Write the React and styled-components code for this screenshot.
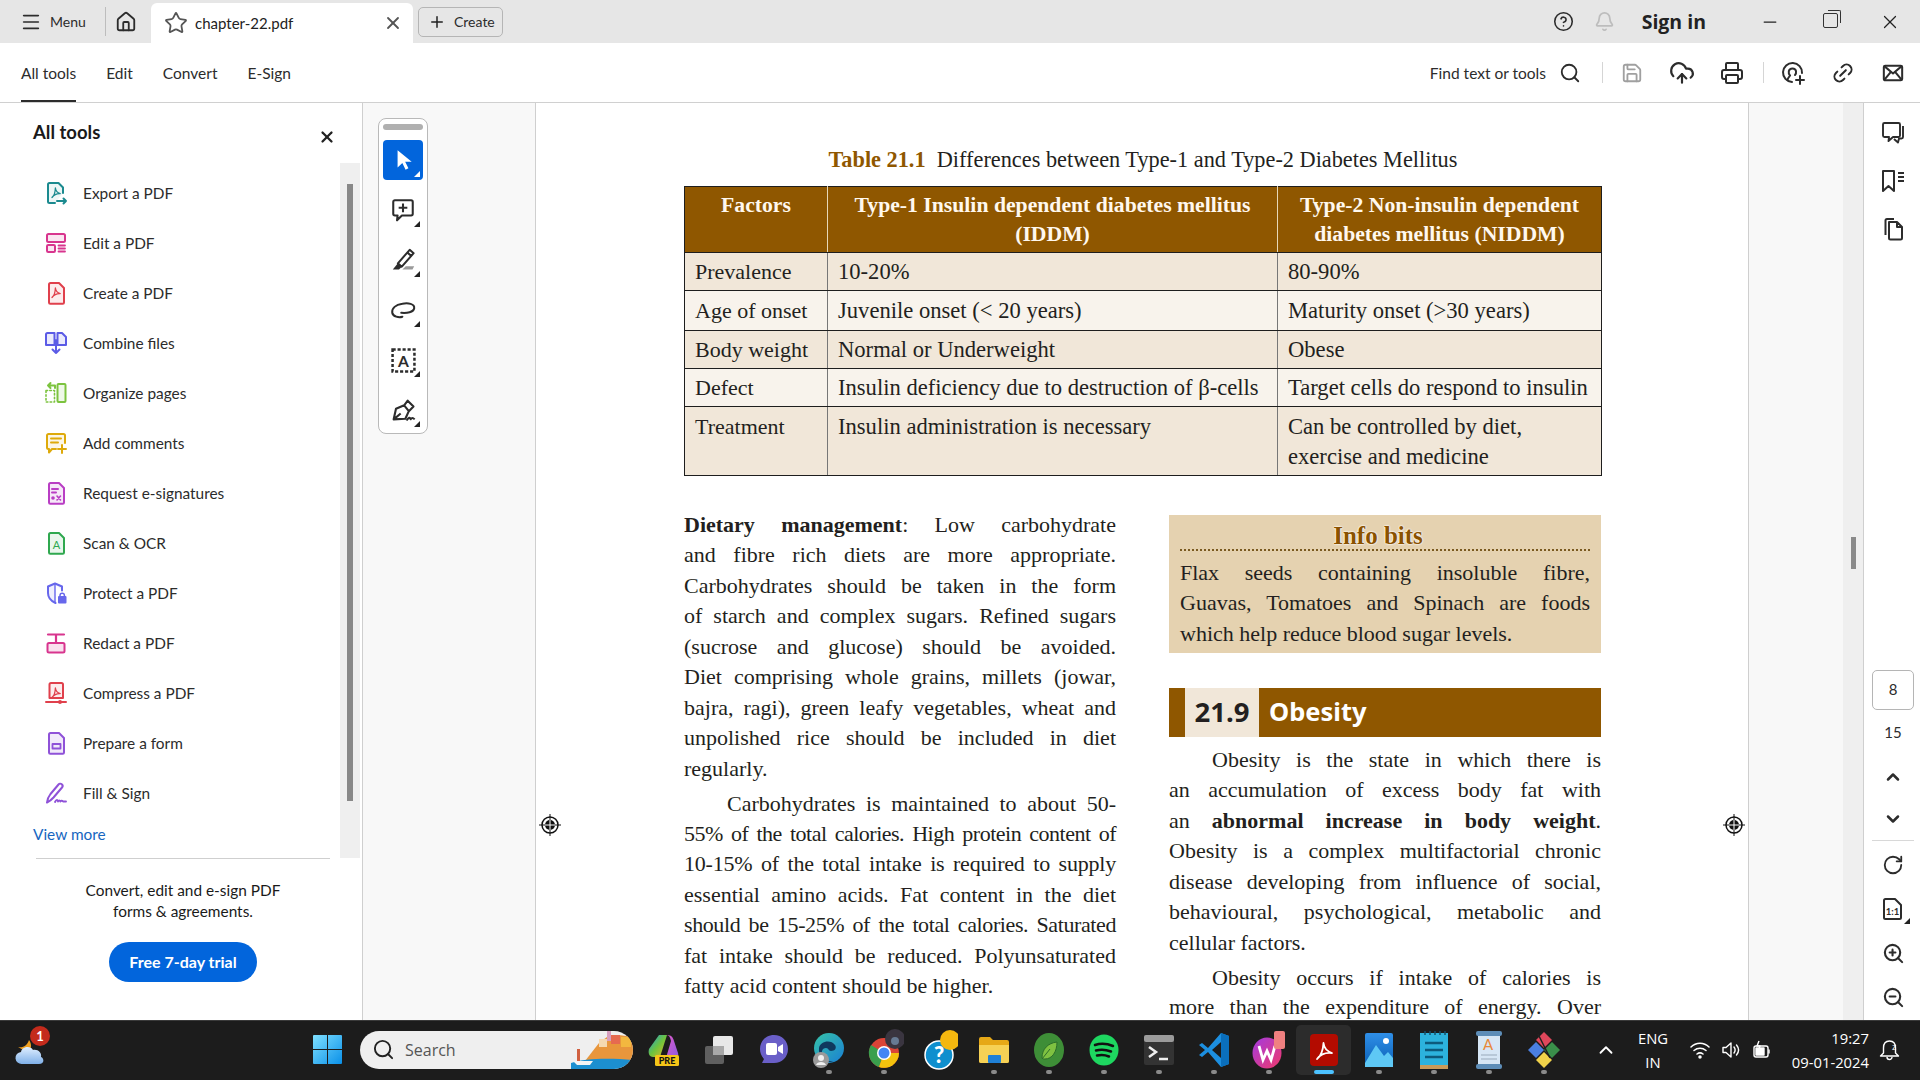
import React from 'react';
import styled, { createGlobalStyle } from 'styled-components';
import {
  Menu, Home, Star, X, Plus, CircleHelp, Bell, Search, Save, CloudUpload, Printer, Link2,
  ChevronUp, ChevronDown, RotateCw, ZoomIn, ZoomOut, Minus,
} from 'lucide-react';

const Global = createGlobalStyle`
  html, body { margin: 0; padding: 0; background: #fff; }
  body { font-family: Lato, "Open Sans", sans-serif; color: #2c2c2c; }
  * { box-sizing: border-box; }
`;

const Glyph = ({ c }) => (
  <path d="M8 16.5c2-1.6 3.2-4.6 3.4-9.5.3 2.6 2 4.800 4.800 5.600-2.800-.2-5.800.6-8.200 3.900z" fill="none" stroke={c} strokeWidth="1.300" strokeLinejoin="round" />
);

const SideIcon = ({ children }) => (
  <svg width="24" height="24" viewBox="0 0 24 24" fill="none" strokeLinecap="round" strokeLinejoin="round">{children}</svg>
);

const DOC = 'M5 21.500V3.500A1.500 1.500 0 0 1 6.500 2H15l5 5v14.500a1.200 1.200 0 0 1-1.200 1.200H6.200A1.200 1.200 0 0 1 5 21.500z';

const tools = [
  ['Export a PDF', <SideIcon key="a">
    <path d="M19 12V6.500L14.500 2H5.500A1.500 1.500 0 0 0 4 3.500v17A1.500 1.500 0 0 0 5.500 22H11" stroke="#1b8a8f" strokeWidth="2" fill="#1b8a8f" fillOpacity=".08" />
    <Glyph c="#1b8a8f" />
    <path d="M13 20h9M19.500 17.500 22 20l-2.500 2.500" stroke="#1b8a8f" strokeWidth="2" />
  </SideIcon>],
  ['Edit a PDF', <SideIcon key="b">
    <rect x="3" y="3" width="18" height="8" rx="1.500" stroke="#d8358e" strokeWidth="2" fill="#d8358e" fillOpacity=".12" />
    <rect x="3" y="14" width="8" height="7" rx="1.200" stroke="#d8358e" strokeWidth="2" fill="#d8358e" fillOpacity=".12" />
    <path d="M14.500 14.500H21M14.500 17.500H21M14.500 20.500H21" stroke="#d8358e" strokeWidth="1.800" />
  </SideIcon>],
  ['Create a PDF', <SideIcon key="c">
    <path d={DOC} stroke="#e0404c" strokeWidth="2" fill="#e0404c" fillOpacity=".1" />
    <Glyph c="#e0404c" />
  </SideIcon>],
  ['Combine files', <SideIcon key="d">
    <path d="M10.500 14H2V3.500A1.500 1.500 0 0 1 3.500 2h7zM13.500 14H22V6l-4-4h-4.500z" stroke="#5b5be6" strokeWidth="2" fill="#5b5be6" fillOpacity=".12" />
    <path d="M12 9v13M8.500 18.500 12 22l3.500-3.500" stroke="#5b5be6" strokeWidth="2" />
  </SideIcon>],
  ['Organize pages', <SideIcon key="e">
    <rect x="13.500" y="3" width="8" height="18" rx="1" stroke="#7cc33f" strokeWidth="2" fill="#7cc33f" fillOpacity=".12" />
    <path d="M2 9.500h8.500v11.500H2z" stroke="#7cc33f" strokeWidth="1.600" strokeDasharray="1.600 2.200" />
    <path d="M11 7V4.500H4M6.500 2 4 4.500 6.500 7" stroke="#7cc33f" strokeWidth="2" />
  </SideIcon>],
  ['Add comments', <SideIcon key="f">
    <path d="M12 18H8l-3 3.500V18H4.500A1.500 1.500 0 0 1 3 16.500v-12A1.500 1.500 0 0 1 4.500 3h15A1.500 1.500 0 0 1 21 4.500V12" stroke="#deaa0b" strokeWidth="2" fill="#deaa0b" fillOpacity=".1" />
    <path d="M7 7.500h10M7 11.500h7M18 14v8M14 18h8" stroke="#deaa0b" strokeWidth="2" />
  </SideIcon>],
  ['Request e-signatures', <SideIcon key="g">
    <path d={DOC} stroke="#b93ec4" strokeWidth="2" fill="#b93ec4" fillOpacity=".12" />
    <path d="M8 8h6M8 11.500h4" stroke="#b93ec4" strokeWidth="2" />
    <circle cx="9" cy="17" r="1.800" fill="#b93ec4" />
    <path d="m13 15 3.500 4M16.500 15 13 19" stroke="#b93ec4" strokeWidth="1.600" />
  </SideIcon>],
  ['Scan & OCR', <SideIcon key="h">
    <path d={DOC} stroke="#2fa84f" strokeWidth="2" fill="#2fa84f" fillOpacity=".1" />
    <text x="12.500" y="18" textAnchor="middle" fontSize="11" fontFamily="Lato" fill="#2fa84f">A</text>
  </SideIcon>],
  ['Protect a PDF', <SideIcon key="i">
    <path d="M11 2.500 4 5.500v6.500c0 4.500 3 8 7.500 10M11 2.500l7 3v4" stroke="#6767ec" strokeWidth="2" fill="#6767ec" fillOpacity=".1" />
    <path d="M11 3v18" stroke="#6767ec" strokeWidth="1.400" />
    <rect x="14" y="15" width="8.500" height="7.500" rx="1" fill="#6767ec" />
    <path d="M16 15.500v-1a2.200 2.200 0 0 1 4.400 0v1" stroke="#6767ec" strokeWidth="1.500" />
  </SideIcon>],
  ['Redact a PDF', <SideIcon key="j">
    <path d="M4 3.500h16M12 3.500v8" stroke="#d8358e" strokeWidth="2.200" />
    <rect x="3.500" y="12" width="17" height="9.500" rx="1.500" stroke="#d8358e" strokeWidth="2" fill="#d8358e" fillOpacity=".15" />
  </SideIcon>],
  ['Compress a PDF', <SideIcon key="k">
    <path d="M5.500 17V3.500A1.500 1.500 0 0 1 7 2h10.500A1.500 1.500 0 0 1 19 3.500V17z" stroke="#e0404c" strokeWidth="2" fill="#e0404c" fillOpacity=".1" />
    <Glyph c="#e0404c" />
    <path d="M2 21h20" stroke="#e0404c" strokeWidth="2" />
    <circle cx="16" cy="21" r="2" fill="#e0404c" />
  </SideIcon>],
  ['Prepare a form', <SideIcon key="l">
    <path d={DOC} stroke="#8f52d8" strokeWidth="2" fill="#8f52d8" fillOpacity=".12" />
    <rect x="8.500" y="13" width="8" height="4.500" stroke="#8f52d8" strokeWidth="1.800" />
  </SideIcon>],
  ['Fill & Sign', <SideIcon key="m">
    <path d="M3 21.500c.3-3.500 1.500-6 3.500-8.500L14.500 3.500a2.300 2.300 0 0 1 3.500 3l-8.500 10c-1.800 2-3.800 3.800-6.500 5z" stroke="#8f52d8" strokeWidth="2" />
    <path d="M11 21c1.500-3 2.500-2.500 3-.5 1-1.500 1.700-1.500 2.300 0 .8-1 1.700-1 3 0H22" stroke="#8f52d8" strokeWidth="1.900" />
  </SideIcon>],
];

const Tri = styled.i`
  position: absolute;
  right: ${(p) => p.$r || 3}px;
  bottom: ${(p) => p.$b || 3}px;
  width: 0;
  height: 0;
  border-left: 6px solid transparent;
  border-bottom: 6px solid ${(p) => (p.$light ? '#fff' : '#222')};
`;

const railIcons = [
  <svg key="1" width="26" height="26" viewBox="0 0 24 24"><path d="M7 3v16l4.400-4.200 3 6.200 2.600-1.300-3-6H20z" fill="#fff" /></svg>,
  <svg key="2" width="26" height="26" viewBox="0 0 24 24" fill="none" stroke="#2c2c2c" strokeWidth="1.900" strokeLinejoin="round"><path d="M4.500 3h15A1.500 1.500 0 0 1 21 4.500v11a1.500 1.500 0 0 1-1.500 1.500H11l-4.500 4.500.5-4.500H4.500A1.500 1.500 0 0 1 3 15.500v-11A1.500 1.500 0 0 1 4.500 3zM12 6v8M8 10h8" /></svg>,
  <svg key="3" width="27" height="27" viewBox="0 1 24 24" fill="none" stroke="#2c2c2c" strokeWidth="1.800" strokeLinejoin="round"><path d="M7 15.500 17.500 3.500l3.500 3L10.500 18.500zM15.500 6l3.500 3" /><path d="m7 15.500 3.500 3L8 21H2.500z" fill="#2c2c2c" stroke="none" /><path d="M11 21h9l1.500-3h-7.500z" fill="#9a9a9a" stroke="none" /></svg>,
  <svg key="4" width="27" height="27" viewBox="0 0 24 24" fill="none" stroke="#2c2c2c" strokeWidth="1.800" strokeLinecap="round"><path d="M10 14c5 .5 11-.5 11.500-4C22 6 16 5 11 6 5 7 1.500 10 2 14c.5 3.500 6 4.500 9 3.500" /></svg>,
  <svg key="5" width="25" height="25" viewBox="0 0 24 24" fill="none"><rect x="1.500" y="1.500" width="21" height="21" stroke="#2c2c2c" strokeWidth="2.400" strokeDasharray="3 1.800" /><text x="12" y="18" textAnchor="middle" fontSize="15" fontWeight="700" fontFamily="Lato" fill="#2c2c2c">A</text></svg>,
  <svg key="6" width="28" height="28" viewBox="0 0 24 24" fill="none" stroke="#2c2c2c" strokeWidth="1.800" strokeLinejoin="round"><path d="m4 20 2-9 7-3 4 5-3 6.500zM13 8l3-4 5 5-4 4M4 20l6-5" /><path d="M15 21c2-3 3-3 3.500-1 1-1.500 2-1.500 3.500 0" strokeWidth="1.700" /></svg>,
];

const Shot = styled.div`
  width: 1920px;
  height: 1080px;
  display: flex;
  flex-direction: column;
  overflow: hidden;
`;

/* title bar */
const TitleBar = styled.div`
  height: 43px;
  flex: none;
  display: flex;
  align-items: center;
  background: #e6e6e6;
  font-size: 14px;
`;

const MenuBtn = styled.div`
  display: flex;
  align-items: center;
  gap: 8px;
  padding-left: 20px;
  width: 106px;
  height: 29px;
  border-right: 1px solid #bdbdbd;
`;

const HomeBtn = styled.div`
  width: 45px;
  padding-right: 5px;
  display: flex;
  justify-content: center;
`;

const Tab = styled.div`
  align-self: flex-end;
  width: 262px;
  height: 40px;
  display: flex;
  align-items: center;
  padding: 0 10px 0 13px;
  background: #fff;
  border-radius: 6px 6px 0 0;
  font-size: 15px;
  color: #222;
`;

const TabName = styled.span`
  flex: 1;
  margin-left: 7px;
`;

const CreateBtn = styled.div`
  margin-left: 5px;
  width: 85px;
  height: 30px;
  display: flex;
  align-items: center;
  gap: 8px;
  padding-left: 9px;
  border: 1px solid #b5b5b5;
  border-radius: 5px;
  font-size: 14px;
`;

const TitleRight = styled.div`
  margin-left: auto;
  display: flex;
  align-items: center;
`;

const BellIcon = styled(Bell)`
  margin-left: 20px;
`;

const SignIn = styled.span`
  margin: 0 34px 0 27px;
  font-family: "Open Sans", sans-serif;
  font-weight: 700;
  font-size: 19.500px;
  color: #222;
`;

const WinBtn = styled.div`
  width: 60px;
  display: flex;
  justify-content: center;
`;

const Restore = styled.div`
  position: relative;
  width: 15px;
  height: 15px;
  margin-top: -3px;
  border: 1.500px solid #333;
  border-radius: 2px;

  &::after {
    content: '';
    position: absolute;
    top: -4px;
    right: -4px;
    width: 12px;
    height: 12px;
    border-top: 1.500px solid #333;
    border-right: 1.500px solid #333;
    border-radius: 0 2px 0 0;
  }
`;

/* tool bar */
const ToolBar = styled.div`
  height: 60px;
  flex: none;
  display: flex;
  align-items: stretch;
  background: #fff;
  border-bottom: 1px solid #d0d0d0;
`;

const NavTabs = styled.div`
  display: flex;
  gap: 30px;
  margin-left: 21px;
`;

const NavTab = styled.div`
  display: flex;
  align-items: center;
  font-size: 15.500px;
  color: #2c2c2c;
  border-bottom: 2px solid ${(p) => (p.$active ? '#2c2c2c' : 'transparent')};
  border-top: 2px solid transparent;
`;

const ToolActions = styled.div`
  margin-left: auto;
  padding-right: 2px;
  display: flex;
  align-items: center;
`;

const FindLabel = styled.span`
  margin-right: 13px;
  font-size: 15.500px;
`;

const VSep = styled.span`
  width: 1px;
  height: 21px;
  background: #d5d5d5;
  margin: 0 ${(p) => p.$r}px 0 ${(p) => p.$l}px;
`;

const ActBtn = styled.div`
  width: 50px;
  display: flex;
  justify-content: center;
`;

const LinkIcon = styled(Link2)`
  transform: rotate(-45deg);
`;

/* main area */
const Main = styled.div`
  position: relative;
  flex: 1;
  min-height: 0;
  display: flex;
`;

const Sidebar = styled.aside`
  width: 363px;
  flex: none;
  display: flex;
  flex-direction: column;
  background: #fff;
  border-right: 1px solid #cfcfcf;
`;

const PanelHead = styled.div`
  height: 60px;
  flex: none;
  display: flex;
  justify-content: space-between;
  padding: 18px 26px 0 33px;
`;

const PanelTitle = styled.h2`
  margin: 0;
  font-size: 18.500px;
  font-weight: 700;
  line-height: 22px;
  color: #1a1a1a;
`;

const PanelClose = styled(X)`
  margin-top: 7px;
`;

const Scroller = styled.div`
  height: 695px;
  flex: none;
  display: flex;
`;

const ToolList = styled.div`
  flex: 1;
  padding-top: 5px;
`;

const ToolRow = styled.div`
  height: 50px;
  display: flex;
  align-items: center;
  gap: 15px;
  padding-left: 44px;
  font-size: 15.400px;
  color: #2c2c2c;
`;

const ViewMore = styled.a`
  display: block;
  margin: 1px 0 0 33px;
  line-height: 30px;
  font-size: 15.400px;
  color: #1666c0;
`;

const Track = styled.div`
  width: 20px;
  margin-right: 2px;
  background: #efefef;
  padding: 21px 0 0 7px;
`;

const Thumb = styled.div`
  width: 6px;
  height: ${(p) => p.$h}px;
  background: #888;
`;

const Promo = styled.div`
  margin: 0 32px 0 36px;
  padding-top: 21px;
  border-top: 1px solid #cfcfcf;
  display: flex;
  flex-direction: column;
  align-items: center;
  text-align: center;
  font-size: 15.400px;
  line-height: 21px;
  color: #1a1a1a;
`;

const TrialBtn = styled.div`
  margin-top: 20px;
  width: 148px;
  height: 40px;
  border-radius: 20px;
  background: #0265dc;
  color: #fff;
  font-size: 16px;
  font-weight: 700;
  line-height: 40px;
`;

const ToolGutter = styled.div`
  width: 173px;
  flex: none;
  padding: 15px 0 0 15px;
  background: #f8f8f8;
  border-right: 1px solid #cfcfcf;
`;

const FloatBar = styled.div`
  width: 50px;
  height: 316px;
  padding: 5px 4px 0;
  background: #fff;
  border: 1px solid #b9b9b9;
  border-radius: 8px;
  display: flex;
  flex-direction: column;
  gap: 10px;
`;

const Handle = styled.div`
  height: 6px;
  border-radius: 3px;
  background: #b0b0b0;
`;

const RailBtn = styled.div`
  position: relative;
  width: 40px;
  height: 40px;
  flex: none;
  display: flex;
  align-items: center;
  justify-content: center;
  border-radius: 4px;
  background: ${(p) => (p.$on ? '#0265dc' : 'transparent')};
`;

/* page */
const Page = styled.main`
  width: 1213px;
  flex: none;
  padding: 42px 0 0 148px;
  background: #fff;
  border-right: 1px solid #cfcfcf;
  overflow: hidden;
  font-family: "Liberation Serif", serif;
  font-size: 22px;
  color: #231f20;
`;

const Caption = styled.div`
  width: 918px;
  height: 30px;
  margin-bottom: 11px;
  font-size: 22.300px;
  line-height: 30px;
  text-align: center;
  white-space: pre;
`;

const CapNum = styled.b`
  color: #8f5700;
`;

const Table = styled.table`
  width: 917px;
  table-layout: fixed;
  border-collapse: collapse;
  line-height: 29px;
`;

const ColA = styled.col`
  width: 143px;
`;

const ColB = styled.col`
  width: 450px;
`;

const ColC = styled.col`
  width: 324px;
`;

const HeadRow = styled.tr`
  height: 66px;
`;

const Tr = styled.tr`
  height: ${(p) => p.$h}px;
  background: ${(p) => (p.$alt ? '#f8f3ec' : '#f1e7d9')};
`;

const Th = styled.th`
  padding: 4px 8px 0;
  background: #8f5700;
  color: #fff8ee;
  font-size: 21.700px;
  border: 1px solid #1e1e1e;
  border-left-color: #e8d8b8;
  border-right-color: #e8d8b8;
  &:first-child { border-left-color: #1e1e1e; }
  &:last-child { border-right-color: #1e1e1e; }
  vertical-align: top;
`;

const Td = styled.td`
  padding: ${(p) => (p.$top ? '5px 8px 0 10px' : '0 8px 0 10px')};
  border: 1px solid #777;
  border-top-color: #1e1e1e;
  border-bottom-color: #1e1e1e;
  line-height: ${(p) => (p.$top ? '30px' : '29px')};
  vertical-align: ${(p) => (p.$top ? 'top' : 'middle')};
  white-space: nowrap;
  &:first-child { border-left-color: #1e1e1e; }
  &:last-child { border-right-color: #1e1e1e; }
  & + & { font-size: 22.600px; }
`;

const Columns = styled.div`
  display: flex;
  gap: 53px;
  margin-top: 34px;
  width: 918px;
`;

const Col = styled.div`
  width: 432px;
  flex: none;
`;

const Para = styled.p`
  margin: ${(p) => p.$mt || 0}px 0 4.500px;
  line-height: 30.450px;
`;

const L = styled.span`
  display: block;
  white-space: normal;
  text-align: justify;
  text-align-last: ${(p) => (p.$end ? 'left' : 'justify')};
  text-indent: ${(p) => (p.$indent ? '43px' : '0')};
  letter-spacing: ${(p) => p.$ls || 0}px;
`;

/* last line sits right above the task bar, so its box is kept short */
const ClosingL = styled(L)`
  margin-top: 3px;
  line-height: 22px;
`;

const InfoBox = styled.div`
  margin-top: 5px;
  height: 138px;
  padding: 6px 11px 0;
  background: #e5d2b0;
`;

const InfoHead = styled.div`
  height: 30px;
  margin-bottom: 7px;
  padding-right: 14px;
  line-height: 30px;
  text-align: center;
  font-size: 25px;
  font-weight: 700;
  color: #8a5200;
  border-bottom: 2px dotted #7a5a20;
  text-shadow: 0 0 1px #fff, 0 0 2px #fff, 0 0 2px #fff;
`;

const SecHead = styled.div`
  margin-top: 35px;
  height: 49px;
  display: flex;
  align-items: stretch;
  padding-left: 16px;
  background: #8f5700;
  font-family: "Noto Sans", sans-serif;
  font-weight: 700;
  line-height: 47px;
`;

const SecNum = styled.span`
  width: 74px;
  text-align: center;
  background: #f1e7d9;
  color: #231f20;
  font-size: 27.500px;
`;

const SecTitle = styled.span`
  margin-left: 10px;
  font-size: 25.500px;
  color: #fff;
`;

const Mark = styled.svg`
  position: absolute;
  top: 710px;
  left: ${(p) => p.$x}px;
`;

const PageGutter = styled.div`
  width: 94px;
  flex: none;
  background: #f8f8f8;
`;

const Strip = styled.div`
  width: 20px;
  flex: none;
  padding: 434px 0 0 8px;
  background: #efefef;
`;

const StripThumb = styled.div`
  width: 5px;
  height: 32px;
  background: #8a8a8a;
`;

const RightRail = styled.div`
  flex: 1;
  display: flex;
  flex-direction: column;
  align-items: center;
  padding: 6px 0 1px 2px;
  background: #fff;
  border-left: 1px solid #cfcfcf;
  font-size: 15px;
`;

const RailSlot = styled.div`
  position: relative;
  width: 100%;
  height: ${(p) => p.$h}px;
  flex: none;
  display: flex;
  align-items: center;
  justify-content: center;
`;

const PageBox = styled.div`
  margin-top: auto;
  width: 42px;
  height: 40px;
  border: 1px solid #b5b5b5;
  border-radius: 5px;
  line-height: 37px;
  text-align: center;
`;

const PageTotal = styled.div`
  margin: 10px 0 12px;
  line-height: 24px;
`;

const RailLine = styled.div`
  width: 42px;
  height: 1px;
  margin-bottom: 2px;
  background: #d8d8d8;
`;

/* task bar */
const TaskBar = styled.footer`
  height: 60px;
  flex: none;
  display: flex;
  align-items: center;
  padding-bottom: 2px;
  background: #1c1c1c;
  border-top: 1px solid #3a3a3a;
  color: #fff;
`;

const Weather = styled.div`
  position: relative;
  width: 313px;
  padding-left: 15px;
  display: flex;
`;

const Badge = styled.span`
  position: absolute;
  left: 30px;
  top: -8px;
  width: 20px;
  height: 20px;
  border-radius: 50%;
  background: #c42b1c;
  font-size: 13px;
  font-weight: 700;
  line-height: 20px;
  text-align: center;
`;

const SearchPill = styled.div`
  width: 273px;
  height: 38px;
  margin-left: 18px;
  display: flex;
  align-items: center;
  gap: 10px;
  padding-left: 12px;
  border-radius: 19px;
  background: #efefef;
  color: #555;
  font-family: "Open Sans", sans-serif;
  font-size: 16px;
  overflow: hidden;
`;

const SearchArt = styled.svg`
  margin-left: auto;
`;

const Apps = styled.div`
  margin-left: 3px;
  display: flex;
`;

const AppSlot = styled.div`
  position: relative;
  width: 55px;
  height: 50px;
  display: flex;
  align-items: center;
  justify-content: center;
  border-radius: 5px;
  background: ${(p) => (p.$active ? '#2c2c2c' : 'transparent')};

  &::after {
    content: '';
    position: absolute;
    display: ${(p) => (p.$dot || p.$active ? 'block' : 'none')};
    bottom: 1px;
    left: 50%;
    width: ${(p) => (p.$active ? 20 : 6)}px;
    height: 4px;
    transform: translateX(-50%);
    border-radius: 2px;
    background: ${(p) => (p.$active ? '#4cc2ff' : '#8a8a8a')};
  }
`;

const Tray = styled.div`
  margin-left: 24px;
  display: flex;
  align-items: center;
  font-family: "Open Sans", sans-serif;
  font-size: 14.800px;
`;

const Lang = styled.div`
  width: 42px;
  margin: 0 16px 0 15px;
  line-height: 24px;
  text-align: center;
`;

const TrayIcons = styled.div`
  display: flex;
  gap: 11px;
  align-items: center;
`;

const Clock = styled.div`
  width: 97px;
  text-align: right;
  line-height: 24px;
`;

const BellWrap = styled.div`
  margin-left: 10px;
  display: flex;
`;

const rows = [
  [38, 'Prevalence', '10-20%', '80-90%'],
  [40, 'Age of onset', 'Juvenile onset (< 20 years)', 'Maturity onset (>30 years)'],
  [38, 'Body weight', 'Normal or Underweight', 'Obese'],
  [38, 'Defect', 'Insulin deficiency due to destruction of β-cells', 'Target cells do respond to insulin'],
];

const left1 = [
  'and fibre rich diets are more appropriate.',
  'Carbohydrates should be taken in the form',
  'of starch and complex sugars. Refined sugars',
  '(sucrose and glucose) should be avoided.',
  'Diet comprising whole grains, millets (jowar,',
  'bajra, ragi), green leafy vegetables, wheat and',
  'unpolished rice should be included in diet',
];

const left2 = [
  ['55% of the total calories. High protein content of', -0.5],
  ['10-15% of the total intake is required to supply', -0.2],
  ['essential amino acids. Fat content in the diet', 0],
  ['should be 15-25% of the total calories. Saturated', -0.4],
  ['fat intake should be reduced. Polyunsaturated', 0],
];

const Cross = () => (
  <>
    <circle cx="12" cy="12" r="8" fill="none" stroke="#111" strokeWidth="1.500" />
    <circle cx="12" cy="12" r="5" fill="#111" />
    <path d="M12 1v22M1 12h22" stroke="#111" strokeWidth="1" />
    <path d="M12 7v10M7 12h10" stroke="#fff" strokeWidth="1" />
  </>
);

const ShareIcon = () => (
  <svg width="24" height="24" viewBox="0 0 24 24" fill="none" stroke="#2c2c2c" strokeWidth="2" strokeLinecap="round">
    <path d="M11 21a9.500 9.500 0 1 1 10-9" />
    <path d="M6.500 19c.5-3 2-3 2.500-4.500-2-2-2-7 2.500-7s4 5 2.500 6.500" />
    <path d="M19 15v8M15 19h8" />
  </svg>
);

const MailIcon = () => (
  <svg width="22" height="22" viewBox="0 0 24 24" fill="none" stroke="#2c2c2c" strokeWidth="2.200" strokeLinejoin="round">
    <rect x="2" y="4" width="20" height="16" rx="1.500" />
    <path d="m2.500 4.500 9.500 8 9.500-8M2.500 19.500l7-8.500M21.500 19.500l-7-8.500" />
  </svg>
);

const CommentsIcon = () => (
  <svg width="24" height="24" viewBox="0 0 24 24" fill="none" stroke="#2c2c2c" strokeWidth="1.900" strokeLinejoin="round">
    <path d="M3.500 2h14a1.500 1.500 0 0 1 1.500 1.500v11a1.500 1.500 0 0 1-1.500 1.500H12l-4.500 4 .5-4H3.500A1.500 1.500 0 0 1 2 14.500v-11A1.500 1.500 0 0 1 3.500 2z" />
    <path d="M22 5v11a1.500 1.500 0 0 1-1.500 1.500H18l-1 4-4-3.500" />
  </svg>
);

const BookmarkIcon = () => (
  <svg width="24" height="24" viewBox="0 0 24 24" fill="none" stroke="#2c2c2c" strokeWidth="2" strokeLinejoin="round">
    <path d="M2 2h11v20l-5.500-5L2 22zM17 4h6M17 8h6M17 12h6" />
  </svg>
);

const PagesIcon = () => (
  <svg width="24" height="24" viewBox="0 0 24 24" fill="none" stroke="#2c2c2c" strokeWidth="2" strokeLinejoin="round">
    <path d="M8 5h8l5 5v11a1.500 1.500 0 0 1-1.500 1.500h-10A1.500 1.500 0 0 1 8 21zM16 5v5h5" />
    <path d="M4.500 18V3.500A1.500 1.500 0 0 1 6 2h7" />
  </svg>
);

const ActualSize = () => (
  <svg width="22" height="24" viewBox="0 0 22 24" fill="none" stroke="#2c2c2c" strokeWidth="2" strokeLinejoin="round">
    <path d="M2 3.500A1.500 1.500 0 0 1 3.500 2H13l6 6v12.500a1.500 1.500 0 0 1-1.500 1.500h-14A1.500 1.500 0 0 1 2 20.500z" />
    <text x="10.500" y="17.500" textAnchor="middle" fontSize="9.500" fontWeight="700" fontFamily="Lato" fill="#2c2c2c" stroke="none">1:1</text>
  </svg>
);

const apps = [
  { key: 'copilot', el: (
    <svg width="32" height="34" viewBox="0 0 32 34">
      <defs><linearGradient id="cp" x1="0" y1="0" x2="1" y2="1"><stop offset="0" stopColor="#1b9de2" /><stop offset=".5" stopColor="#6dc23e" /><stop offset="1" stopColor="#e9b824" /></linearGradient><linearGradient id="cp2" x1="0" y1="0" x2="1" y2="1"><stop offset="0" stopColor="#e259c8" /><stop offset="1" stopColor="#8a5be0" /></linearGradient></defs>
      <path d="M11 2h8l-7 22H5C1 24 0 20 1 16z" fill="url(#cp)" />
      <path d="M19 2c4 0 6 2 7 6l4 12c1 3-1 5-5 5h-7l5-17c-.5-3-2-6-4-6z" fill="url(#cp2)" />
      <rect x="7" y="22" width="24" height="11" rx="1.500" fill="#f5c518" />
      <text x="19" y="31" textAnchor="middle" fontSize="9" fontWeight="900" fontFamily="Lato" fill="#111">PRE</text>
    </svg>) },
  { key: 'tasks', el: (
    <svg width="30" height="30" viewBox="0 0 30 30"><rect x="1" y="11" width="19" height="18" rx="2" fill="#5f5f5f" /><rect x="9" y="1" width="20" height="19" rx="2" fill="#e8e8e8" /><rect x="9" y="11" width="11" height="9" fill="#a8a8a8" /></svg>) },
  { key: 'meet', el: (
    <svg width="30" height="34" viewBox="0 0 30 34"><path d="M15 2c8 0 14 6 14 14s-6 14-14 14H3l2-4C2 23 1 19 1 16 1 8 7 2 15 2z" fill="#6a5fc8" /><rect x="7" y="10" width="11" height="12" rx="2" fill="#fff" /><path d="m19 14 5-3v10l-5-3z" fill="#fff" /></svg>) },
  { key: 'edge', dot: true, el: (
    <svg width="32" height="38" viewBox="0 0 32 38">
      <defs><linearGradient id="ed" x1="0" y1="0" x2="1" y2="1"><stop offset="0" stopColor="#36c3a8" /><stop offset="1" stopColor="#1a7fd4" /></linearGradient></defs>
      <circle cx="16" cy="17" r="15" fill="url(#ed)" />
      <path d="M6 17c1-7 12-9 16-3 2 3 0 6-4 6-3 0-2-3-5-3-4 0-6 5-2 10 2 2 6 4 10 3-8 4-16-4-15-13z" fill="#10395e" />
      <circle cx="8" cy="29" r="8" fill="#9a9a9a" /><circle cx="8" cy="27" r="3" fill="#efefef" /><path d="M3 34c1-4 9-4 10 0z" fill="#efefef" />
    </svg>) },
  { key: 'chrome', dot: true, el: (
    <svg width="40" height="42" viewBox="-4 0 40 42">
      <circle cx="16" cy="24" r="15" fill="#db4437" />
      <path d="M16 24 3 16A15 15 0 0 0 11 38z" fill="#3a9f4d" />
      <path d="M16 24h15a15 15 0 0 1-20 14z" fill="#f4c20d" />
      <circle cx="16" cy="24" r="7" fill="#fff" /><circle cx="16" cy="24" r="5.500" fill="#4285f4" />
      <circle cx="27" cy="10" r="10" fill="#3a3540" /><circle cx="27" cy="12" r="4" fill="#677a93" />
    </svg>) },
  { key: 'help', el: (
    <svg width="38" height="40" viewBox="-4 0 38 40">
      <circle cx="15" cy="25" r="14" fill="#0f8fce" stroke="#fff" strokeWidth="1.500" />
      <text x="15" y="33" textAnchor="middle" fontSize="22" fontWeight="900" fontFamily="Lato" fill="#fff">?</text>
      <circle cx="26" cy="10" r="10" fill="#f4b70f" />
    </svg>) },
  { key: 'files', dot: true, el: (
    <svg width="32" height="28" viewBox="0 0 32 28"><path d="M1 3a2 2 0 0 1 2-2h9l3 3h14a2 2 0 0 1 2 2v19a2 2 0 0 1-2 2H3a2 2 0 0 1-2-2z" fill="#e6a817" /><path d="M1 9h30v16a2 2 0 0 1-2 2H3a2 2 0 0 1-2-2z" fill="#f6d155" /><rect x="10" y="19" width="13" height="8" rx="1" fill="#1f80d6" /></svg>) },
  { key: 'leaf', dot: true, el: (
    <svg width="32" height="36" viewBox="0 0 32 36"><ellipse cx="16" cy="18" rx="15" ry="17" fill="#3e8e37" /><path d="M9 26c0-9 6-15 15-16 0 10-5 17-12 17-1 0-2 0-3-1zM9 27l8-10" fill="#7fc241" stroke="#2c6e2a" /></svg>) },
  { key: 'spotify', dot: true, el: (
    <svg width="30" height="32" viewBox="0 0 30 32"><ellipse cx="15" cy="16" rx="14.500" ry="15.500" fill="#1ed760" /><path d="M6 11c6-2 12-1.500 18 1M7 16.500c5-1.500 10-1 15 1M8 21.500c4-1 8-.8 12 1" fill="none" stroke="#111" strokeWidth="2.500" strokeLinecap="round" /></svg>) },
  { key: 'term', dot: true, el: (
    <svg width="30" height="30" viewBox="0 0 30 30"><rect x="0" y="0" width="30" height="30" rx="2" fill="#333" /><rect width="30" height="7" rx="2" fill="#9b9b9b" /><path d="m5 12 7 5-7 5" fill="none" stroke="#eee" strokeWidth="2.500" /><path d="M15 24h9" stroke="#eee" strokeWidth="2.500" /></svg>) },
  { key: 'vscode', dot: true, el: (
    <svg width="30" height="36" viewBox="0 0 30 36"><path d="M22 1 9 16 3 11 0 13l6 5-6 5 3 2 6-5 13 15 8-3V4z" fill="#1c8fe0" /><path d="M22 1v34l8-3V4z" fill="#0a6fbd" /><path d="m22 10-9 8 9 8z" fill="#1c1c1c" /></svg>) },
  { key: 'wps', dot: true, el: (
    <svg width="34" height="38" viewBox="0 0 34 38">
      <defs><linearGradient id="wp" x1="0" y1="0" x2="1" y2="1"><stop offset="0" stopColor="#a33be0" /><stop offset="1" stopColor="#f0396b" /></linearGradient></defs>
      <ellipse cx="15" cy="22" rx="14.500" ry="15.500" fill="url(#wp)" />
      <path d="m7 15 4 14 4-9 4 9 4-14" fill="none" stroke="#fff" strokeWidth="2.800" />
      <rect x="22" y="0" width="11" height="18" rx="2" fill="#f08080" />
    </svg>) },
  { key: 'acrobat', active: true, el: (
    <svg width="28" height="32" viewBox="0 0 28 32"><rect width="28" height="32" rx="4" fill="#b30b00" /><path d="M7 25c4-3 6-8 6.500-16 .5 5 3 8 8.500 10-5-.5-11 .5-15 6z" fill="none" stroke="#fff" strokeWidth="1.800" strokeLinejoin="round" /></svg>) },
  { key: 'photos', dot: true, el: (
    <svg width="28" height="34" viewBox="0 0 28 34">
      <defs><linearGradient id="ph" x1="0" y1="0" x2="0" y2="1"><stop offset="0" stopColor="#2f8fe8" /><stop offset="1" stopColor="#0a5fb4" /></linearGradient></defs>
      <path d="M2 0h24a2 2 0 0 1 2 2v30a2 2 0 0 1-2 2H2a2 2 0 0 1-2-2V2a2 2 0 0 1 2-2z" fill="url(#ph)" />
      <circle cx="21" cy="8" r="3" fill="#fff" />
      <path d="M0 30 11 12l8 11 4-4 5 6v9H0z" fill="#5ec8f5" />
    </svg>) },
  { key: 'notes', dot: true, el: (
    <svg width="28" height="38" viewBox="0 0 28 38"><rect y="2" width="28" height="34" fill="#2cb2dd" /><rect y="34" width="28" height="4" fill="#c89a58" /><path d="M5 0v4M10 0v4M15 0v4M20 0v4M25 0v4" stroke="#14506a" strokeWidth="1.500" /><path d="M5 12h18M5 19h18M5 26h18" stroke="#0d5a7c" strokeWidth="2.500" /></svg>) },
  { key: 'write', dot: true, el: (
    <svg width="28" height="38" viewBox="0 0 28 38"><path d="M3 2h22v34H3z" fill="#d6e6f5" /><rect x="1" y="0" width="26" height="5" rx="2" fill="#5d8db8" /><rect x="1" y="33" width="26" height="5" rx="2" fill="#5d8db8" /><text x="13" y="19" textAnchor="middle" fontSize="15" fontFamily="Lato" fill="#e8893a">A</text><path d="M6 24h16M6 28h16" stroke="#9ab" strokeWidth="1" /></svg>) },
  { key: 'kraken', dot: true, el: (
    <svg width="32" height="38" viewBox="0 0 32 38"><path d="m16 1 8 8-8 8-8-8z" fill="#e0475b" /><path d="m8 11 8 8-8 8-8-8z" fill="#4a7fe0" /><path d="m24 11 8 8-8 8-8-8z" fill="#3a8f4a" /><path d="m16 21 8 8-8 8-8-8z" fill="#f0d24a" /><path d="m10 3 12 24" stroke="#222" strokeWidth="1.500" /></svg>) },
];

const App = () => (
  <Shot>
    <Global />
    <TitleBar>
      <MenuBtn><Menu size={22} strokeWidth={1.800} color="#2c2c2c" />Menu</MenuBtn>
      <HomeBtn><Home size={22} strokeWidth={2} color="#2c2c2c" /></HomeBtn>
      <Tab>
        <Star size={24} strokeWidth={1.800} color="#555" />
        <TabName>chapter-22.pdf</TabName>
        <X size={20} strokeWidth={2.200} color="#555" />
      </Tab>
      <CreateBtn><Plus size={18} strokeWidth={2} color="#222" />Create</CreateBtn>
      <TitleRight>
        <CircleHelp size={21} strokeWidth={1.800} color="#2c2c2c" />
        <BellIcon size={21} strokeWidth={2} color="#bdbdbd" />
        <SignIn>Sign in</SignIn>
        <WinBtn><Minus size={20} strokeWidth={1.500} color="#222" /></WinBtn>
        <WinBtn><Restore /></WinBtn>
        <WinBtn><X size={22} strokeWidth={1.300} color="#222" /></WinBtn>
      </TitleRight>
    </TitleBar>

    <ToolBar>
      <NavTabs>
        <NavTab $active>All tools</NavTab>
        <NavTab>Edit</NavTab>
        <NavTab>Convert</NavTab>
        <NavTab>E-Sign</NavTab>
      </NavTabs>
      <ToolActions>
        <FindLabel>Find text or tools</FindLabel>
        <Search size={22} strokeWidth={2} color="#2c2c2c" />
        <VSep $l={21} $r={4} />
        <ActBtn><Save size={22} strokeWidth={2} color="#a0a0a0" /></ActBtn>
        <ActBtn><CloudUpload size={26} strokeWidth={2} color="#2c2c2c" /></ActBtn>
        <ActBtn><Printer size={24} strokeWidth={2} color="#2c2c2c" /></ActBtn>
        <VSep $l={6} $r={4} />
        <ActBtn><ShareIcon /></ActBtn>
        <ActBtn><LinkIcon size={24} strokeWidth={2} color="#2c2c2c" /></ActBtn>
        <ActBtn><MailIcon /></ActBtn>
      </ToolActions>
    </ToolBar>

    <Main>
      <Sidebar>
        <PanelHead>
          <PanelTitle>All tools</PanelTitle>
          <PanelClose size={18} strokeWidth={3} color="#222" />
        </PanelHead>
        <Scroller>
          <ToolList>
            {tools.map(([label, icon]) => (
              <ToolRow key={label}>{icon}{label}</ToolRow>
            ))}
            <ViewMore>View more</ViewMore>
          </ToolList>
          <Track><Thumb $h={617} /></Track>
        </Scroller>
        <Promo>
          Convert, edit and e-sign PDF<br />forms &amp; agreements.
          <TrialBtn>Free 7-day trial</TrialBtn>
        </Promo>
      </Sidebar>

      <ToolGutter>
        <FloatBar>
          <Handle />
          {railIcons.map((icon, i) => (
            <RailBtn key={i} $on={i === 0}>{icon}<Tri $light={i === 0} /></RailBtn>
          ))}
        </FloatBar>
      </ToolGutter>

      <Page>
        <Caption><CapNum>Table 21.1</CapNum>{'  '}Differences between Type-1 and Type-2 Diabetes Mellitus</Caption>
        <Table>
          <colgroup>
            <ColA />
            <ColB />
            <ColC />
          </colgroup>
          <thead>
            <HeadRow>
              <Th>Factors</Th>
              <Th>Type-1 Insulin dependent diabetes mellitus (IDDM)</Th>
              <Th>Type-2 Non-insulin dependent diabetes mellitus (NIDDM)</Th>
            </HeadRow>
          </thead>
          <tbody>
            {rows.map(([h, a, b, c], i) => (
              <Tr key={a} $h={h} $alt={i % 2 === 1}>
                <Td>{a}</Td><Td>{b}</Td><Td>{c}</Td>
              </Tr>
            ))}
            <Tr $h={69}>
              <Td $top>Treatment</Td>
              <Td $top>Insulin administration is necessary</Td>
              <Td $top>Can be controlled by diet,<br />exercise and medicine</Td>
            </Tr>
          </tbody>
        </Table>

        <Columns>
          <Col>
            <Para>
              <L><b>Dietary management</b>: Low carbohydrate</L>
              {left1.map((t) => <L key={t}>{t}</L>)}
              <L $end>regularly.</L>
            </Para>
            <Para>
              <L $indent>Carbohydrates is maintained to about 50-</L>
              {left2.map(([t, ls]) => <L key={t} $ls={ls}>{t}</L>)}
              <L $end>fatty acid content should be higher.</L>
            </Para>
          </Col>
          <Col>
            <InfoBox>
              <InfoHead>Info bits</InfoHead>
              <Para>
                <L>Flax seeds containing insoluble fibre,</L>
                <L>Guavas, Tomatoes and Spinach are foods</L>
                <L $end>which help reduce blood sugar levels.</L>
              </Para>
            </InfoBox>
            <SecHead><SecNum>21.9</SecNum><SecTitle>Obesity</SecTitle></SecHead>
            <Para $mt={8}>
              <L $indent>Obesity is the state in which there is</L>
              <L>an accumulation of excess body fat with</L>
              <L>an <b>abnormal increase in body weight</b>.</L>
              <L>Obesity is a complex multifactorial chronic</L>
              <L>disease developing from influence of social,</L>
              <L>behavioural, psychological, metabolic and</L>
              <L $end>cellular factors.</L>
            </Para>
            <Para>
              <L $indent>Obesity occurs if intake of calories is</L>
              <ClosingL>more than the expenditure of energy. Over</ClosingL>
            </Para>
          </Col>
        </Columns>
      </Page>

      <Mark $x={538} width="24" height="24" viewBox="0 0 24 24"><Cross /></Mark>
      <Mark $x={1722} width="24" height="24" viewBox="0 0 24 24"><Cross /></Mark>

      <PageGutter />
      <Strip><StripThumb /></Strip>

      <RightRail>
        <RailSlot $h={48}><CommentsIcon /></RailSlot>
        <RailSlot $h={48}><BookmarkIcon /></RailSlot>
        <RailSlot $h={48}><PagesIcon /></RailSlot>
        <PageBox>8</PageBox>
        <PageTotal>15</PageTotal>
        <RailSlot $h={42}><ChevronUp size={20} strokeWidth={3} color="#2c2c2c" /></RailSlot>
        <RailSlot $h={42}><ChevronDown size={20} strokeWidth={3} color="#2c2c2c" /></RailSlot>
        <RailLine />
        <RailSlot $h={44}><RotateCw size={22} strokeWidth={2} color="#2c2c2c" /></RailSlot>
        <RailSlot $h={44}><ActualSize /><Tri $r={10} $b={7} /></RailSlot>
        <RailSlot $h={44}><ZoomIn size={23} strokeWidth={2.200} color="#2c2c2c" /></RailSlot>
        <RailSlot $h={44}><ZoomOut size={23} strokeWidth={2.200} color="#2c2c2c" /></RailSlot>
      </RightRail>
    </Main>

    <TaskBar>
      <Weather>
        <svg width="32" height="32" viewBox="0 0 32 32">
          <defs><linearGradient id="cl" x1="0" y1="0" x2="0" y2="1"><stop offset="0" stopColor="#dfeeff" /><stop offset="1" stopColor="#7fb0e8" /></linearGradient></defs>
          <path d="M3 13c5 1 9-1 11-7 3 4 3 10-2 12z" fill="#f0a020" />
          <path d="M7 30a6 6 0 0 1-1-12c1-5 9-7 12-2 5-1 9 3 8 7 3 1 4 7-2 7z" fill="url(#cl)" />
        </svg>
        <Badge>1</Badge>
      </Weather>
      <svg width="29" height="29" viewBox="0 0 29 29">
        <defs><linearGradient id="wn" x1="0" y1="0" x2="1" y2="1"><stop offset="0" stopColor="#7fe0ff" /><stop offset="1" stopColor="#0a90e8" /></linearGradient></defs>
        <path d="M0 1a1 1 0 0 1 1-1h13v14H0zM15 0h13a1 1 0 0 1 1 1v13H15zM0 15h14v14H1a1 1 0 0 1-1-1zM15 15h14v13a1 1 0 0 1-1 1H15z" fill="url(#wn)" />
      </svg>
      <SearchPill>
        <Search size={23} strokeWidth={2} color="#222" />
        Search
        <SearchArt width="62" height="38" viewBox="0 0 62 38">
          <path d="M14 30 28 12l8-6 12-2 14 2v24z" fill="#e8963c" />
          <rect x="28" y="8" width="8" height="8" fill="#f5d9b0" />
          <rect x="40" y="4" width="9" height="9" fill="#e66a50" />
          <rect x="50" y="6" width="10" height="10" fill="#f3b83f" />
          <rect x="36" y="0" width="4" height="10" fill="#d8a0c0" />
          <path d="M0 32c14-5 40-5 62-3v9H0z" fill="#1c8fd0" />
          <path d="M2 30h20l-3 4H6z" fill="#f4f4f4" />
          <rect x="6" y="18" width="3" height="12" fill="#d06040" />
        </SearchArt>
      </SearchPill>
      <Apps>
        {apps.map((a) => (
          <AppSlot key={a.key} $dot={a.dot} $active={a.active}>{a.el}</AppSlot>
        ))}
      </Apps>
      <Tray>
        <ChevronUp size={22} strokeWidth={2} color="#fff" />
        <Lang>ENG<br />IN</Lang>
        <TrayIcons>
          <svg width="20" height="20" viewBox="0 0 20 20" fill="none" stroke="#fff" strokeWidth="1.500" strokeLinecap="round"><path d="M1 7c5-5 13-5 18 0M4 10.500c3.500-3 8.500-3 12 0M7 14c2-1.500 4-1.500 6 0" /><circle cx="10" cy="17" r="1" fill="#fff" /></svg>
          <svg width="20" height="20" viewBox="0 0 20 20" fill="none" stroke="#fff" strokeWidth="1.400" strokeLinejoin="round" strokeLinecap="round"><path d="M2 7.500h3L10 3v14l-5-4.500H2zM13 7c1.500 2 1.500 4 0 6M15.500 5c2.500 3 2.500 7 0 10" /></svg>
          <svg width="20" height="20" viewBox="0 0 20 20" fill="none" stroke="#fff" strokeWidth="1.400" strokeLinejoin="round"><rect x="2" y="6" width="14" height="11" rx="2" /><rect x="4" y="8" width="8" height="7" fill="#fff" /><path d="M17 9.500v4" /><path d="M7 1 5 6h3l-1 3" /></svg>
        </TrayIcons>
        <Clock>19:27<br />09-01-2024</Clock>
        <BellWrap>
          <svg width="21" height="24" viewBox="0 0 21 24" fill="none" stroke="#fff" strokeWidth="1.400" strokeLinejoin="round"><path d="M10.500 3c4 0 6 3 6 7v5l3 3H1.500l3-3v-5c0-4 2-7 6-7zM8 19a2.500 2.500 0 0 0 5 0" /><text x="13" y="12" fontSize="9" fontFamily="Open Sans" fill="#fff" stroke="none">z</text></svg>
        </BellWrap>
      </Tray>
    </TaskBar>
  </Shot>
);

export default App;
